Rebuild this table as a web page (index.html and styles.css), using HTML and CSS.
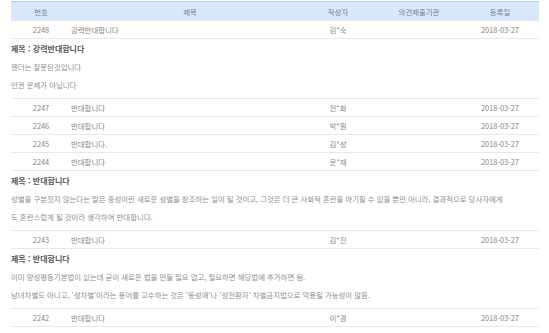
FILE: index.html
```html
<!DOCTYPE html>
<html lang="ko">
<head>
<meta charset="utf-8">
<title>의견 목록</title>
<link rel="stylesheet" href="styles.css">
</head>
<body>
<div class="board">
  <div class="row head">
    <div class="c num">번호</div>
    <div class="c title-h">제목</div>
    <div class="c">작성자</div>
    <div class="c">의견제출기관</div>
    <div class="c date">등록일</div>
  </div>

  <div class="row">
    <div class="c num">2248</div>
    <div class="c title">강력반대합니다</div>
    <div class="c">김*숙</div>
    <div class="c"></div>
    <div class="c date">2018-03-27</div>
  </div>
  <div class="detail">
    <p class="subject">제목 : 강력반대합니다</p>
    <p>젠더는 잘못된것입니다</p>
    <p>인권 문제가 아닙니다</p>
  </div>

  <div class="row">
    <div class="c num">2247</div>
    <div class="c title">반대합니다</div>
    <div class="c">전*화</div>
    <div class="c"></div>
    <div class="c date">2018-03-27</div>
  </div>
  <div class="row">
    <div class="c num">2246</div>
    <div class="c title">반대합니다</div>
    <div class="c">박*원</div>
    <div class="c"></div>
    <div class="c date">2018-03-27</div>
  </div>
  <div class="row">
    <div class="c num">2245</div>
    <div class="c title">반대합니다.</div>
    <div class="c">김*성</div>
    <div class="c"></div>
    <div class="c date">2018-03-27</div>
  </div>
  <div class="row">
    <div class="c num">2244</div>
    <div class="c title">반대합니다</div>
    <div class="c">문*재</div>
    <div class="c"></div>
    <div class="c date">2018-03-27</div>
  </div>
  <div class="detail">
    <p class="subject">제목 : 반대합니다</p>
    <p>성별을 구분짓지 않는다는 말은 중성이란 새로운 성별을 창조하는 일이 될 것이고, 그것은 더 큰 사회적 혼란을 야기할 수 있을 뿐만 아니라, 결과적으로 당사자에게</p>
    <p>도 혼란스럽게 될 것이라 생각하여 반대합니다.</p>
  </div>

  <div class="row">
    <div class="c num">2243</div>
    <div class="c title">반대합니다</div>
    <div class="c">김*진</div>
    <div class="c"></div>
    <div class="c date">2018-03-27</div>
  </div>
  <div class="detail">
    <p class="subject">제목 : 반대합니다</p>
    <p>이미 양성평등기본법이 있는데 굳이 새로운 법을 만들 필요 없고, 필요하면 해당법에 추가하면 됨.</p>
    <p>남녀차별도 아니고, '성차별'이라는 용어를 고수하는 것은 '동성애'나 '성전환자' 차별금지법으로 악용될 가능성이 많음.</p>
  </div>

  <div class="row">
    <div class="c num">2242</div>
    <div class="c title">반대합니다</div>
    <div class="c">이*경</div>
    <div class="c"></div>
    <div class="c date">2018-03-27</div>
  </div>
</div>
</body>
</html>
```

FILE: styles.css
```css
* { box-sizing: border-box; }

html, body {
  margin: 0;
  padding: 0;
  background: #ffffff;
}

body {
  font-family: "Noto Sans CJK KR", "Noto Sans", sans-serif;
  font-size: 7.4px;
  color: #868686;
}

.board {
  margin: 1px 10px 0 11px;
}

.row {
  display: grid;
  grid-template-columns: 60px 238px 58px 104px 68px;
  height: 18px;
  border-bottom: 1px solid #e8e8e8;
  align-items: center;
}

.row.head {
  height: 20px;
  background: #d7e9f8;
  border-top: 1px solid #a9cdea;
  border-bottom: none;
  color: #6a7f99;
}

.c {
  text-align: center;
  white-space: nowrap;
  overflow: hidden;
  line-height: 17px;
}

.c.title {
  text-align: left;
}

.c.date {
  padding-right: 10px;
}

.detail {
  padding: 1px 0 4px;
  border-bottom: 1px solid #e8e8e8;
}

.detail p {
  margin: 0;
  line-height: 18px;
  white-space: nowrap;
  color: #8e8e8e;
}

.detail p.subject {
  font-size: 8px;
  font-weight: 700;
  color: #575757;
}
```
